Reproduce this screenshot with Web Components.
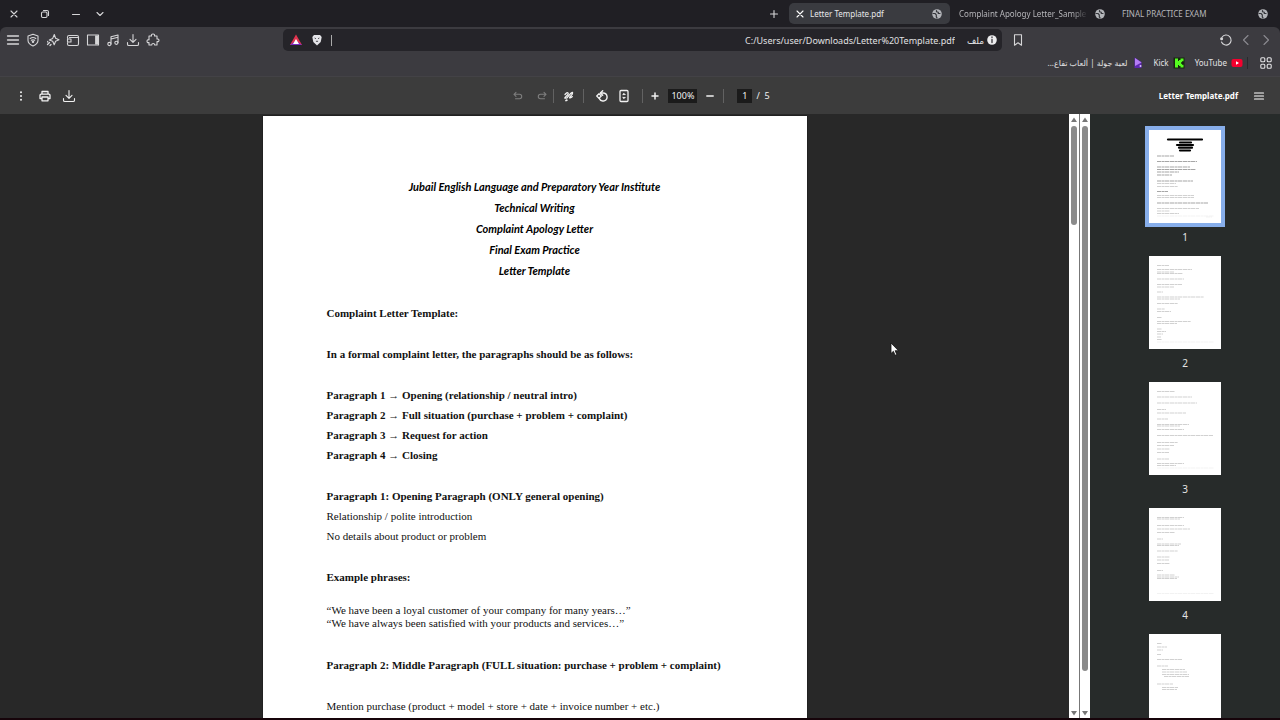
<!DOCTYPE html>
<html lang="en">
<head>
<meta charset="utf-8">
<title>Letter Template.pdf</title>
<style>
html, body { margin: 0; height: 100%; }
body { background: #201f24; overflow: hidden; font-family: "Noto Sans", "Open Sans", "DejaVu Sans", sans-serif; font-size: 9px; color: #d6d6d8; }
</style>
</head>
<body>
<pdf-browser></pdf-browser>
<script>
const ICONS = {
  close: '<path d="M5 5l6 6M11 5l-6 6"/>',
  restore: '<rect x="4.500" y="6" width="5.500" height="5.500" rx="1.200"/><path d="M6.500 4.500h3.500q1.500 0 1.500 1.500v3.500"/>',
  minimise: '<path d="M4.500 8.500h7"/>',
  chevron: '<path d="M5 6.500l3 3 3-3"/>',
  plus: '<path d="M8 4.500v7M4.500 8h7"/>',
  menu: '<path d="M2.500 4h11M2.500 8h11M2.500 12h11" stroke-width="1.300"/>',
  vpn: '<path d="M8 2.300l5 1.700v4.200q0 3.600-5 5.800q-5-2.200-5-5.800V4z"/><path d="M5.200 6.500q2.800-2 5.600 0M6.300 8.300q1.700-1.200 3.400 0"/><circle cx="8" cy="9.800" r=".7" fill="currentColor"/>',
  leo: '<path d="M9.300 2.500l1.300 3.800 3.400 1.400-3.400 1.500-1.400 3.600-1.500-3.500L4.300 8l3.400-1.600z"/><path d="M4.500 10.500L2.500 12.500M6 12.500l-1 1M2.700 9.500v.5" stroke-width="1.300"/>',
  wallet: '<path d="M2.500 6V5q0-1.500 1.500-1.500h8q1.500 0 1.500 1.500v7q0 1.500-1.500 1.500H4q-1.500 0-1.500-1.500v-1M4.500 5.500h9M2.500 7h3.500v3H2.500z"/>',
  sidebar: '<rect x="2.500" y="3" width="11" height="10"/><path d="M11.700 3.500v9" stroke-width="3.200" stroke-linecap="butt"/>',
  music: '<path d="M6 12V4.800l7-1.800v7.500M6 7l7-1.800"/><circle cx="4.400" cy="12" r="1.600"/><circle cx="11.400" cy="10.800" r="1.600"/>',
  download: '<path d="M8 2.500v7.500M5 7.300l3 3 3-3M2.500 10.500v1.700q0 1.300 1.300 1.300h8.400q1.300 0 1.300-1.300v-1.700"/>',
  puzzle: '<path d="M4 4h2.500q-.5-2 1.500-2t1.500 2H12v3q2-.3 2 1.300t-2 1.300V13H9.700q0-1.500-1.500-1.500T6.700 13H4v-2.500q-2 .5-2-1.300t2-1.300z"/>',
  bookmark: '<path d="M4.500 2.800h7v10.400L8 10.800l-3.500 2.400z"/>',
  reload: '<path d="M4 5.200A5 5 0 1 1 3.500 10"/><circle cx="3.600" cy="6.800" r="1.500" fill="currentColor" stroke="none"/>',
  back: '<path d="M10 3.500L5.500 8l4.500 4.500"/>',
  forward: '<path d="M6 3.500L10.500 8 6 12.500"/>',
  apps: '<rect x="2.800" y="2.800" width="4" height="4" rx="1"/><rect x="9.200" y="2.800" width="4" height="4" rx="1"/><rect x="2.800" y="9.200" width="4" height="4" rx="1"/><rect x="9.200" y="9.200" width="4" height="4" rx="1"/>',
  dots: '<g fill="currentColor" stroke="none"><circle cx="8" cy="4.300" r="1"/><circle cx="8" cy="8" r="1"/><circle cx="8" cy="11.700" r="1"/></g>',
  print: '<path d="M5 6V3.500h6V6M5 10.500H3V7.300q0-1.100 1.100-1.100h7.800q1.100 0 1.100 1.100v3.200h-2M5 9h6v3.800H5z" stroke-width="1.300"/>',
  undo: '<path d="M6 4.300L4 6.300l2 2M4 6.300h5.500q2.200 0 2.200 2.200t-2.200 2.300H5.500"/>',
  redo: '<path d="M10 4.300l2 2-2 2M12 6.300H6.500q-2.200 0-2.200 2.200t2.200 2.300h4"/>',
  draw: '<path d="M4 6.500Q6 4 7 5T5 8.500t1 1.300l3.300-4q2-2 2.300-1t-1.800 3.200-.5 1.900 2-1.300" stroke-width="1.300"/><path d="M5 12.500l.8-.3" stroke-width="1.800"/>',
  rotate: '<path d="M6.800 5H9a4 4 0 1 1-3.600 5.600" stroke-width="1.400"/><path d="M8.700 2.700L6.400 5l2.300 2.300" stroke-width="1.400"/><path d="M5 5.800L7.300 8 5 10.300 2.700 8z" stroke-width="1.300"/>',
  fit: '<rect x="4" y="2.500" width="8" height="11" rx="1" stroke-width="1.300"/><path d="M7 6.300l1-1 1 1zM7 9.700l1 1 1-1z" stroke-width="1"/>',
  bigplus: '<path d="M8 5v6M5 8h6" stroke-width="1.500"/>',
  bigminus: '<path d="M4.800 8h6.400" stroke-width="1.500"/>',
  lines: '<path d="M3.500 5h9M3.500 8h9M3.500 11h9" stroke-width="1.200"/>',
  globe: '<circle cx="8" cy="8" r="4.800" fill="#b3b5b9" stroke="none"/><path d="M4 7.500h2l1.300 1.300v2l.7 1M7.500 4.500v1.200l1.800.6v1.200H11" stroke="#35363b" stroke-width="1.200"/>',
  rewards: '<path d="M8 2.500L14 13H2z" fill="#e0334e" stroke="none"/><path d="M2 13l6-4.500L14 13z" fill="#7a2bc2" stroke="none"/><path d="M8 7l3 5H5z" fill="#fff" stroke="none"/>',
  lion: '<path d="M5 3h6l1.700 2-1 5L8 13.500 4.300 10l-1-5z" fill="#e4e4e8" stroke="none"/><path d="M6 6.200l.6.300M10 6.200l-.6.300M7.300 9.300h1.400" stroke="#4a494f" stroke-width="1"/>',
  info: '<circle cx="8" cy="8" r="4.800" fill="#ececee" stroke="none"/><path d="M8 7.500v3M8 5v.5" stroke="#333238" stroke-width="1.300"/>',
  youtube: '<rect x="2.500" y="4" width="11" height="8" rx="2" fill="#f5002e" stroke="none"/><path d="M7 6.300v3.400L10 8z" fill="#fff" stroke="none"/>',
  kick: '<path d="M2.500 2.500h11v11h-11z" fill="#16260f" stroke="none"/><path d="M4 3.500h3v2.500h1V5h1.500V3.500H12.500v2.800H11v1H10v1.400h1v1h1.500v2.800H9.500V11H8v-1H7v2.500H4z" fill="#55fc20" stroke="none"/>',
  game: '<path d="M4.500 2.500L11.500 7v6h-7z" fill="#5d27b0" stroke="none"/><path d="M5 3l6.500 4.500L5 11z" fill="#b47cf5" stroke="none"/><circle cx="10.500" cy="11" r="1" fill="#d9c1ff" stroke="none"/>'
};

const RESET = `<style>
  :host { box-sizing: border-box; }
  *, *::before { box-sizing: border-box; }
  button { border: 0; padding: 0; background: none; color: inherit; font: inherit; display: grid; place-items: center; }
  input { border: 0; padding: 0; margin: 0; font: inherit; outline: 0; min-width: 0; }
  a { color: inherit; text-decoration: none; }
</style>`;

function define(name, html, setup) {
  const template = document.createElement('template');
  template.innerHTML = RESET + html;
  customElements.define(name, class extends HTMLElement {
    constructor() {
      super();
      this.attachShadow({ mode: 'open' }).append(template.content.cloneNode(true));
    }
    connectedCallback() { if (setup) setup(this, this.shadowRoot); }
  });
}

define('ui-icon', `<style>
  :host { display: block; width: 16px; height: 16px; flex: none; }
  svg { display: block; width: 100%; height: 100%; fill: none; stroke: currentColor; stroke-width: 1.1; stroke-linecap: round; stroke-linejoin: round; }
</style><svg viewBox="0 0 16 16" aria-hidden="true"></svg>`,
(el, root) => { root.querySelector('svg').innerHTML = ICONS[el.getAttribute('name')]; });

define('icon-button', `<style>
  :host { display: block; width: 20px; height: 20px; flex: none; }
  button { width: 100%; height: 100%; }
</style><button><ui-icon></ui-icon></button>`,
(el, root) => {
  root.querySelector('button').setAttribute('aria-label', el.getAttribute('label'));
  const icon = document.createElement('ui-icon');
  icon.setAttribute('name', el.getAttribute('name'));
  root.querySelector('ui-icon').replaceWith(icon);
});
</script>
<script>
define('browser-tab', `<style>
  :host { display: flex; align-items: center; width: 161px; height: 21px; padding: 0 5px 0 7px; gap: 4px; border-radius: 5px; color: #b6b6ba; font-size: 8px; }
  :host([active]) { background: #3a3b40; color: #e8e8ea; padding-left: 3px; }
  icon-button { display: none; width: 14px; color: #fff; }
  :host([active]) icon-button { display: block; }
  span { flex: 1; overflow: hidden; white-space: nowrap; line-height: 20px; }
  :host([long]) span { mask-image: linear-gradient(90deg, #000 88%, transparent); }
</style><icon-button name="close" label="Close tab"></icon-button><span><slot></slot></span><ui-icon name="globe"></ui-icon>`);

define('tab-strip', `<style>
  :host { display: flex; align-items: center; height: 27px; padding-right: 4px; background: #201f24; }
  .window { display: flex; gap: 11px; padding-left: 4px; flex: 1; }
  .window icon-button:last-child { margin-left: -7px; }
  .tabs { display: flex; gap: 2px; margin-left: 5px; }
</style>
<div class="window">
  <icon-button name="close" label="Close"></icon-button>
  <icon-button name="restore" label="Restore"></icon-button>
  <icon-button name="minimise" label="Minimise"></icon-button>
  <icon-button name="chevron" label="Search tabs"></icon-button>
</div>
<icon-button name="plus" label="New tab"></icon-button>
<div class="tabs">
  <browser-tab active>Letter Template.pdf</browser-tab>
  <browser-tab long>Complaint Apology Letter_Sample A</browser-tab>
  <browser-tab>FINAL PRACTICE EXAM</browser-tab>
</div>`);

define('nav-bar', `<style>
  :host { display: grid; grid-template-columns: minmax(0, 283fr) minmax(0, 719fr) minmax(0, 278fr); align-items: center; height: 26px; background: #3c3b40; border-radius: 6px 6px 0 0; }
  .tools { display: flex; padding-left: 3px; }
  .box { display: flex; align-items: center; height: 22px; background: #252429; border-radius: 5px; padding: 0 2px 0 5px; color: #e0e0e2; }
  .box i { width: 1px; height: 11px; background: #aaa; margin-left: 6px; }
  .lion { margin-left: 5px; }
  input { flex: 1; background: none; color: inherit; text-align: right; height: 20px; margin-right: 12px; }
  .right { display: flex; align-items: center; padding: 0 4px 0 6px; }
  .push { margin-left: auto; }
  .dim { color: #8b8a90; }
</style>
<div class="tools">
  <icon-button name="menu" label="Menu"></icon-button>
  <icon-button name="vpn" label="VPN"></icon-button>
  <icon-button name="leo" label="Assistant"></icon-button>
  <icon-button name="wallet" label="Wallet"></icon-button>
  <icon-button name="sidebar" label="Sidebar"></icon-button>
  <icon-button name="music" label="Media"></icon-button>
  <icon-button name="download" label="Downloads"></icon-button>
  <icon-button name="puzzle" label="Extensions"></icon-button>
</div>
<div class="box">
  <ui-icon name="rewards"></ui-icon><ui-icon class="lion" name="lion"></ui-icon><i></i>
  <input aria-label="Address" value="C:/Users/user/Downloads/Letter%20Template.pdf">
  <span lang="ar">ملف</span><ui-icon name="info"></ui-icon>
</div>
<div class="right">
  <icon-button name="bookmark" label="Bookmark"></icon-button>
  <icon-button class="push" name="reload" label="Reload"></icon-button>
  <icon-button class="dim" name="back" label="Back"></icon-button>
  <icon-button class="dim" name="forward" label="Forward"></icon-button>
</div>`);

define('bookmark-link', `<style>
  :host { display: block; font-size: 8px; }
  a { display: flex; align-items: center; gap: 2px; white-space: nowrap; line-height: 16px; }
</style><a href="#"><span><slot></slot></span><ui-icon></ui-icon></a>`,
(el, root) => {
  const icon = document.createElement('ui-icon');
  icon.setAttribute('name', el.getAttribute('icon'));
  root.querySelector('ui-icon').replaceWith(icon);
});

define('bookmark-bar', `<style>
  :host { display: flex; align-items: center; justify-content: flex-end; gap: 8px; height: 24px; padding: 0 4px 4px 0; background: #3c3b40; border-bottom: 1px solid #434246; color: #e2e2e4; }
  i { width: 1px; height: 12px; background: #2a292d; margin: 0 0 0 -6px; }
</style>
<bookmark-link icon="game" lang="ar" dir="ltr"><bdi dir="rtl">لعبة جولة | ألعاب تفاع...</bdi></bookmark-link>
<bookmark-link icon="kick">Kick</bookmark-link>
<bookmark-link icon="youtube">YouTube</bookmark-link>
<i></i>
<icon-button name="apps" label="All bookmarks"></icon-button>`);

define('pdf-toolbar', `<style>
  :host { display: grid; grid-template-columns: 1fr auto 1fr; align-items: center; height: 37px; background: #3c3c3c; color: #f1f1f1; }
  div { display: flex; align-items: center; }
  .left { gap: 4px; padding-left: 11px; }
  .mid { padding-right: 2px; }
  .right { justify-content: flex-end; gap: 11px; padding-right: 11px; font-size: 8px; font-weight: 700; color: #fff; }
  .off { color: #7d7d7d; }
  .history { gap: 4px; }
  .view { gap: 2px; }
  i { width: 1px; height: 14px; background: #626262; margin: 0 5px 0 1px; }
  .before { margin: 0 8px 0 4px; }
  .after { margin: 0 2px 0 8px; }
  input { height: 14px; background: #1b1b1b; color: inherit; text-align: center; }
  .zoom { width: 29px; margin: 0 3px; }
  .last { margin: 0 13px 0 3px; }
  .page { width: 15px; margin-right: 4px; }
</style>
<div class="left">
  <icon-button name="dots" label="More"></icon-button>
  <icon-button name="print" label="Print"></icon-button>
  <icon-button name="download" label="Download"></icon-button>
</div>
<div class="mid">
  <div class="history">
    <icon-button class="off" name="undo" label="Undo"></icon-button>
    <icon-button class="off" name="redo" label="Redo"></icon-button>
  </div>
  <i></i>
  <icon-button name="draw" label="Draw"></icon-button>
  <i class="before"></i>
  <div class="view">
    <icon-button name="rotate" label="Rotate"></icon-button>
    <icon-button name="fit" label="Fit to page"></icon-button>
  </div>
  <i class="after"></i>
  <icon-button name="bigplus" label="Zoom in"></icon-button>
  <input class="zoom" aria-label="Zoom" value="100%">
  <icon-button name="bigminus" label="Zoom out"></icon-button>
  <i class="last"></i>
  <input class="page" aria-label="Page" value="1">
  <span>/&nbsp; 5</span>
</div>
<div class="right"><span>Letter Template.pdf</span><icon-button name="lines" label="Thumbnails"></icon-button></div>`);

define('pdf-page', `<style>
  :host { display: block; width: 544px; max-width: 100%; height: 704px; padding: 60px 64px; background: #fff; color: #111; font: 11px/20px "Liberation Serif", "Times New Roman", serif; white-space: nowrap; box-shadow: 0 0 1px #000; }
  header { font: italic 700 11px/21px Lato, "Open Sans", cursive; text-align: center; color: #000; margin-bottom: 22px; }
  h1, h2, p { font-size: inherit; line-height: inherit; margin: 0; }
  header h1, header p { font-weight: inherit; }
  section { margin-bottom: 21px; }
  .quotes { line-height: 13px; margin: -4px 0 25px; }
</style>
<header>
  <h1>Jubail English Language and Preparatory Year Institute</h1>
  <p>Technical Writing</p><p>Complaint Apology Letter</p><p>Final Exam Practice</p><p>Letter Template</p>
</header>
<section><h2>Complaint Letter Template:</h2></section>
<section><h2>In a formal complaint letter, the paragraphs should be as follows:</h2></section>
<section>
  <h2>Paragraph 1 → Opening (relationship / neutral intro)</h2>
  <h2>Paragraph 2 → Full situation (purchase + problem + complaint)</h2>
  <h2>Paragraph 3 → Request for action</h2>
  <h2>Paragraph 4 → Closing</h2>
</section>
<section>
  <h2>Paragraph 1: Opening Paragraph (ONLY general opening)</h2>
  <p>Relationship / polite introduction</p>
  <p>No details about product or problem</p>
</section>
<section><h2>Example phrases:</h2></section>
<section class="quotes">
  <p>“We have been a loyal customer of your company for many years…”</p>
  <p>“We have always been satisfied with your products and services…”</p>
</section>
<section><h2>Paragraph 2: Middle Paragraph (FULL situation: purchase + problem + complaint)</h2></section>
<section><p>Mention purchase (product + model + store + date + invoice number + etc.)</p></section>`);

define('scroll-track', `<style>
  :host { display: flex; flex-direction: column; align-items: center; width: 10px; flex: none; background: #fff; }
  svg { width: 8px; height: 12px; fill: #777; flex: none; }
  div { flex: 1; width: 6px; }
  b { display: block; border-radius: 3px; background: #8b8b8b; height: var(--size); }
</style><svg viewBox="0 0 8 12"><path d="M4 3.500L7 8H1z"/></svg><div><b></b></div><svg viewBox="0 0 8 12"><path d="M4 9.500L7 5H1z"/></svg>`);

/* Miniature text rows of each sheet: [y, start, end, kind] */
const SHEETS = {
  1: [[9.5,19,53,'k'],[12.5,31,42,'k'],[15,28,44,'k'],[17.7,30,43,'k'],[20.5,31,41,'k'],[26,8,25,'b'],[31.5,8,48,'b'],[37,8,41,'b'],[39.5,8,47,'b'],[42,8,30,'b'],[45,8,23,'b'],[51,8,44,'b'],[53.5,8,27],[56.5,8,29],[61.5,8,19,'b'],[65.5,8,45],[67.5,8,45],[73,8,59,'b'],[78.5,8,50],[81,8,21],[83.5,8,30],[86,8,65,'f'],[87,57,63,'f']],
  2: [[9.5,8,20],[13.5,8,43],[16,8,25],[17.5,8,34],[23,8,35],[28.5,8,33],[31,8,25],[36,8,14],[41,8,55],[43,8,31],[47.5,8,29],[53,8,16],[55.5,8,22],[61.5,8,13],[65.5,8,42],[67.5,8,28],[73,8,13],[75.5,8,17],[78,8,14],[81,8,12],[83.5,8,13],[86,8,65,'f']],
  3: [[9.5,8,26],[15,8,43],[21,8,48],[27.5,8,17],[31,8,37],[37,8,19],[42.5,8,40],[44,8,31],[47.5,8,35],[53.5,8,64],[60.5,8,29],[63.5,8,25],[67,8,21],[70.5,8,20],[77,8,20],[81.5,8,35],[83.5,8,27],[86,8,65,'f']],
  4: [[9.5,8,35],[11,8,31],[17.5,8,35],[21,8,41],[24.5,8,26],[31,8,14],[36,8,32],[37.5,8,30],[43,8,29],[49,8,21],[52,8,20],[55.5,8,21],[62.5,8,14],[67,8,26],[69,8,30],[70.5,8,28],[85.5,8,65,'f']],
  5: [[9.5,8,13],[13,8,18],[16,8,14],[20.5,8,12],[25.5,8,33],[32,8,19],[35.5,13,36],[38,13,38],[40.5,13,40],[42.5,15,40],[50,8,24],[53.5,13,29],[55.5,13,28]]
};
define('page-thumb', `<style>
  :host { display: block; flex: none; text-align: center; font-size: 10px; color: #e4e4e4; }
  button { background: #fff; width: 72px; height: 93px; margin: 0 auto; }
  :host([selected]) button { box-shadow: 0 0 0 4px #87aeea; }
  svg { width: 72px; height: 93px; fill: none; stroke: #bdbdbd; stroke-width: .7; stroke-dasharray: 4 .5 2.500 .4 5 .6; }
  .b { stroke: #808080; } .f { stroke: #dedede; stroke-width: .4; }
  .k { stroke: #000; stroke-width: 2.200; stroke-linecap: round; stroke-dasharray: none; }
  span { display: block; line-height: 12px; margin: 8px 0 13px; }
</style><button><svg viewBox="0 0 72 93"></svg></button><span></span>`,
(el, root) => {
  const n = el.getAttribute('page');
  root.querySelector('button').setAttribute('aria-label', 'Go to page ' + n);
  root.querySelector('span').textContent = n;
  root.querySelector('svg').innerHTML = SHEETS[n].map(([y, a, b, k]) => `<path class="${k || ''}" d="M${a} ${y}H${b}"/>`).join('');
});

define('thumb-pane', `<style>
  :host { display: flex; flex-direction: column; align-items: center; width: 190px; flex: none; padding-top: 16px; overflow: hidden; background: #272b2a; }
</style>
<page-thumb page="1" selected></page-thumb><page-thumb page="2"></page-thumb><page-thumb page="3"></page-thumb><page-thumb page="4"></page-thumb><page-thumb page="5"></page-thumb>`);

define('pdf-browser', `<style>
  :host { display: flex; flex-direction: column; height: 100vh; border-bottom: 2px solid #16040a; }
  main { flex: 1; min-height: 0; display: flex; }
  .doc { flex: 1; min-width: 0; overflow: hidden; background: #282828; padding-top: 2px; display: flex; justify-content: center; align-items: flex-start; }
  .bars { display: flex; gap: 1px; background: #777; }
  .wide { --size: 94%; } .short { --size: 17%; }
  .cursor { position: absolute; left: 890px; top: 342px; width: 10px; height: 15px; }
</style>
<tab-strip></tab-strip>
<nav-bar></nav-bar>
<bookmark-bar></bookmark-bar>
<pdf-toolbar></pdf-toolbar>
<main>
  <div class="doc"><pdf-page></pdf-page></div>
  <div class="bars"><scroll-track class="short"></scroll-track><scroll-track class="wide"></scroll-track></div>
  <thumb-pane></thumb-pane>
</main>
<svg class="cursor" viewBox="0 0 10 15" aria-hidden="true"><path d="M1 1v10.500l2.400-2.200 1.700 4 1.700-.8-1.700-3.800H8.500z" fill="#fff" stroke="#111" stroke-width=".8"/></svg>`);
</script>
</body>
</html>
